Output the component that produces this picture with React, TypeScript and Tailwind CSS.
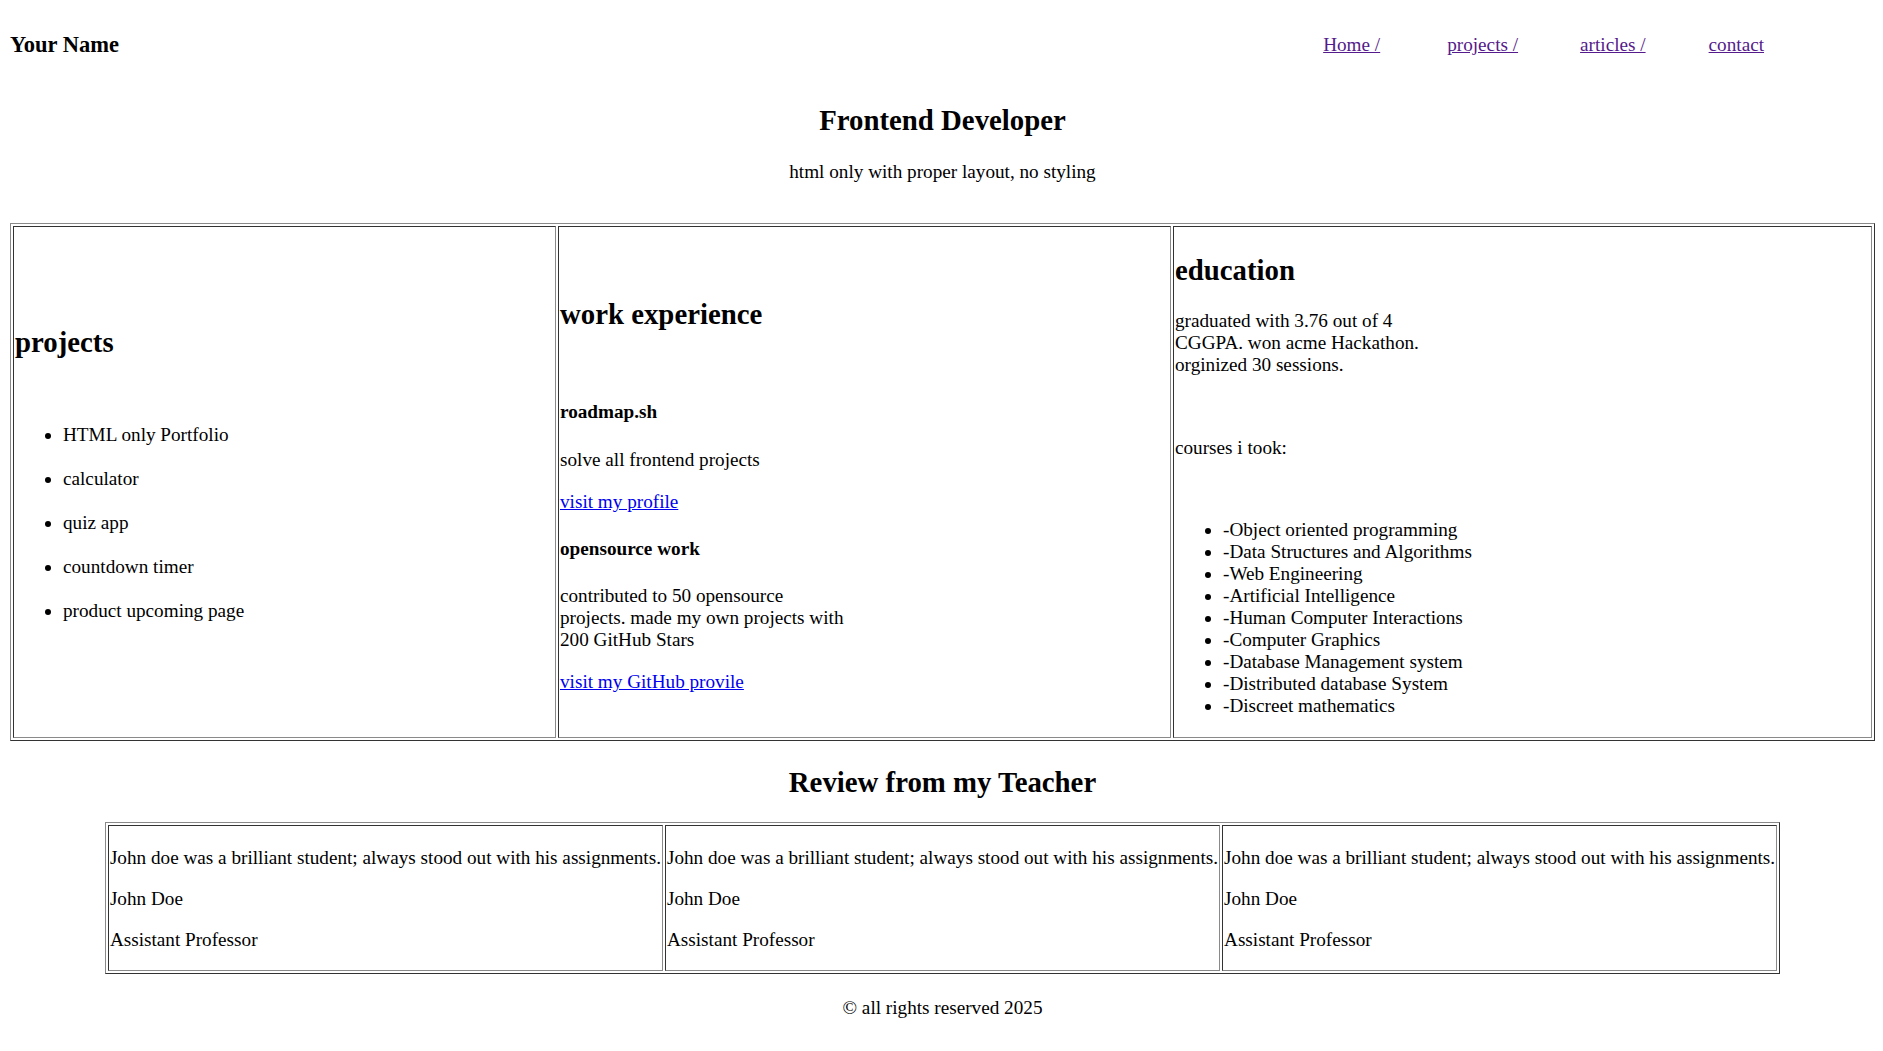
const projects = [
  "HTML only Portfolio",
  "calculator",
  "quiz app",
  "countdown timer",
  "product upcoming page",
];

const courses = [
  "-Object oriented programming",
  "-Data Structures and Algorithms",
  "-Web Engineering",
  "-Artificial Intelligence",
  "-Human Computer Interactions",
  "-Computer Graphics",
  "-Database Management system",
  "-Distributed database System",
  "-Discreet mathematics",
];

const navLinks = [
  { label: "Home /", ml: "" },
  { label: "projects /", ml: "ml-[67px]" },
  { label: "articles /", ml: "ml-[62px]" },
  { label: "contact", ml: "ml-[63px]" },
];

// old-school table[border] look: outset frame, inset cells
const frame =
  "border border-t-[#8a8a8a] border-l-[#8a8a8a] border-b-[#333333] border-r-[#333333] p-[2px]";
const cell =
  "border border-t-[#333333] border-l-[#333333] border-b-[#8a8a8a] border-r-[#8a8a8a] p-[1px]";

const App = () => {
  return (
    <div className="min-h-screen bg-white text-black font-['Liberation_Serif','Times_New_Roman',serif] text-[19.2px] leading-[22px] pl-[10px] pr-[8px] pt-[10px]">
      <header className="flex items-center justify-between">
        <h3 className="text-[22.5px] leading-[26px] font-bold my-[22px]">
          Your Name
        </h3>
        <nav className="flex mr-[111px]">
          {navLinks.map((link) => (
            <a
              key={link.label}
              href="#"
              className={`text-[#551a8b] underline ${link.ml}`}
            >
              {link.label}
            </a>
          ))}
        </nav>
      </header>

      <h2 className="text-center text-[28.8px] leading-[33px] font-bold mt-[24px]">
        Frontend Developer
      </h2>
      <p className="text-center mt-[24px]">
        html only with proper layout, no styling
      </p>

      <div className={`flex gap-[2px] mt-[40px] ${frame}`}>
        {/* projects */}
        <div className={`w-[543px] shrink-0 flex flex-col ${cell}`}>
          <h2 className="text-[28.8px] leading-[33px] font-bold mt-[98px]">
            projects
          </h2>
          <ul className="list-disc pl-[48px] mt-[65px] flex flex-col gap-[22px]">
            {projects.map((p) => (
              <li key={p}>{p}</li>
            ))}
          </ul>
        </div>

        {/* work experience */}
        <div className={`w-[613px] shrink-0 flex flex-col ${cell}`}>
          <h2 className="text-[28.8px] leading-[33px] font-bold mt-[70px]">
            work experience
          </h2>
          <h4 className="font-bold mt-[70px]">roadmap.sh</h4>
          <p className="mt-[26px]">solve all frontend projects</p>
          <p className="mt-[20px]">
            <a href="#" className="text-[#0000ee] underline">
              visit my profile
            </a>
          </p>
          <h4 className="font-bold mt-[25px]">opensource work</h4>
          <p className="mt-[25px]">
            contributed to 50 opensource
            <br />
            projects. made my own projects with
            <br />
            200 GitHub Stars
          </p>
          <p className="mt-[20px]">
            <a href="#" className="text-[#0000ee] underline">
              visit my GitHub provile
            </a>
          </p>
        </div>

        {/* education */}
        <div className={`flex-1 flex flex-col ${cell}`}>
          <h2 className="text-[28.8px] leading-[33px] font-bold mt-[26px]">
            education
          </h2>
          <p className="mt-[23px]">
            graduated with 3.76 out of 4
            <br />
            CGGPA. won acme Hackathon.
            <br />
            orginized 30 sessions.
          </p>
          <p className="mt-[61px]">courses i took:</p>
          <ul className="list-disc pl-[48px] mt-[60px] mb-[19px]">
            {courses.map((c) => (
              <li key={c}>{c}</li>
            ))}
          </ul>
        </div>
      </div>

      <h2 className="text-center text-[28.8px] leading-[33px] font-bold mt-[25px]">
        Review from my Teacher
      </h2>

      <div className={`mx-auto w-fit flex gap-[2px] mt-[23px] ${frame}`}>
        {[0, 1, 2].map((i) => (
          <div key={i} className={`whitespace-nowrap ${cell}`}>
            <p className="mt-[20px]">
              John doe was a brilliant student; always stood out with his
              assignments.
            </p>
            <p className="mt-[19px]">John Doe</p>
            <p className="mt-[19px] mb-[18px]">Assistant Professor</p>
          </div>
        ))}
      </div>

      <p className="text-center mt-[23px] pb-[30px]">© all rights reserved 2025</p>
    </div>
  );
};

export default App;
